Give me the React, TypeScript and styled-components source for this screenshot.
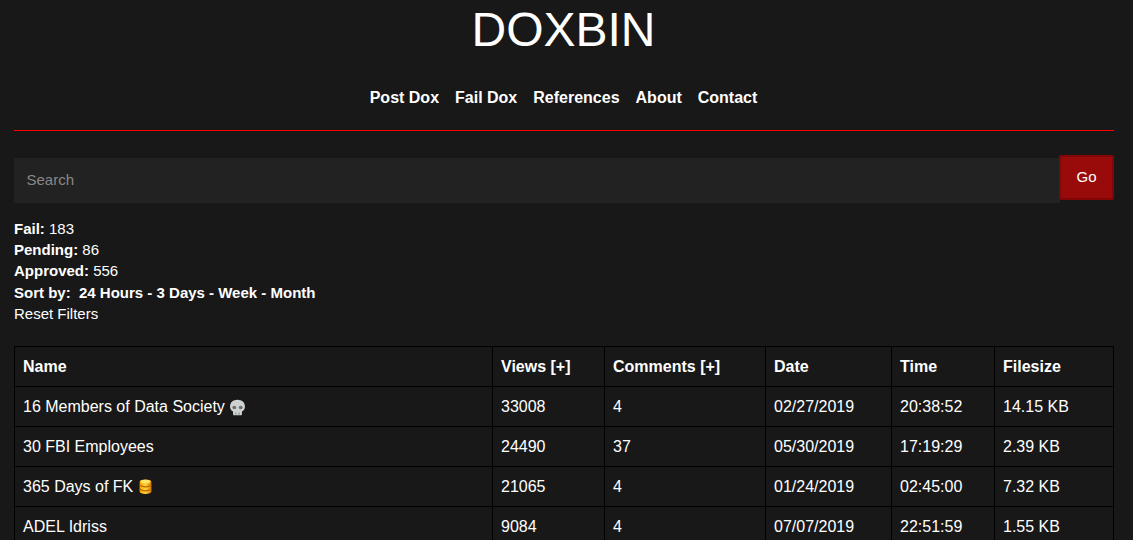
import React from "react";
import styled, { createGlobalStyle } from "styled-components";

interface Dox {
  name: string;
  views: number;
  comments: number;
  date: string;
  time: string;
  size: string;
  badge?: "skull" | "coins";
}

const rows: Dox[] = [
  { name: "16 Members of Data Society", views: 33008, comments: 4, date: "02/27/2019", time: "20:38:52", size: "14.15 KB", badge: "skull" },
  { name: "30 FBI Employees", views: 24490, comments: 37, date: "05/30/2019", time: "17:19:29", size: "2.39 KB" },
  { name: "365 Days of FK", views: 21065, comments: 4, date: "01/24/2019", time: "02:45:00", size: "7.32 KB", badge: "coins" },
  { name: "ADEL Idriss", views: 9084, comments: 4, date: "07/07/2019", time: "22:51:59", size: "1.55 KB" },
];

const GlobalStyle = createGlobalStyle`
  html, body {
    margin: 0;
    height: 540px;
    overflow: hidden;
    background: #181818;
    color: #fff;
    font-family: "Liberation Sans", Arial, sans-serif;
  }
`;

const Page = styled.div`
  width: 1099px;
  padding-left: 14px;
`;

const Title = styled.h1`
  margin: 0;
  height: 60px;
  font-size: 48px;
  font-weight: 400;
  line-height: 60px;
  text-align: center;
`;

const Nav = styled.nav`
  display: flex;
  justify-content: center;
  gap: 16px;
  padding-top: 29px;
  height: 41px;
`;

const NavLink = styled.a`
  font-size: 16px;
  font-weight: 700;
  line-height: 18px;
  color: #fff;
`;

const Divider = styled.hr`
  width: 1100px;
  height: 1px;
  margin: 0 0 24px;
  border: 0;
  background: #f00;
`;

const SearchRow = styled.form`
  display: flex;
  align-items: flex-start;
  width: 1100px;
  margin-bottom: 15px;
`;

const SearchInput = styled.input`
  flex: 1;
  box-sizing: border-box;
  height: 45px;
  margin-top: 3px;
  padding: 0 12.5px 2px;
  border: 0;
  outline: 0;
  background: #222;
  color: #fff;
  font-family: inherit;
  font-size: 15px;

  &::placeholder {
    color: #888;
    opacity: 1;
  }
`;

const GoButton = styled.button`
  box-sizing: border-box;
  width: 55px;
  height: 45px;
  margin-left: -1px;
  padding: 0 0 2px;
  border: 2px solid #830505;
  border-radius: 2px;
  background: #990a0a;
  color: #fff;
  font-family: inherit;
  font-size: 15px;
`;

const Stats = styled.div`
  font-size: 15px;
  line-height: 21.2px;
  margin-bottom: 22px;
`;

const StatLine = styled.div`
  height: 21.2px;
`;

const SortLink = styled.span`
  font-weight: 700;
`;

const Table = styled.table`
  width: 1099px;
  table-layout: fixed;
  border-collapse: collapse;
  font-size: 16px;
`;

const Cell = styled.td`
  box-sizing: border-box;
  height: 40px;
  padding: 2px 8px 0;
  border: 1px solid #000;
  white-space: nowrap;
`;

const HeadCell = styled(Cell).attrs({ as: "th" })<{ $width: number }>`
  width: ${(p) => p.$width}px;
  font-weight: 700;
  text-align: left;
`;

const Badge = styled.svg`
  width: 17px;
  height: 17px;
  margin-left: 4.5px;
  vertical-align: -4px;
`;

const CoinBadge = styled(Badge)`
  margin-left: 3.5px;
  vertical-align: -3px;
`;

const SkullIcon = () => (
  <Badge viewBox="0 0 16 16">
    <path d="M8 .8C3.9.8 1 3.4 1 7c0 2.3 1 3.9 2.8 4.8V14c0 .8.5 1.2 1.2 1.2h6c.7 0 1.2-.4 1.2-1.2v-2.2C14 10.900 15 9.300 15 7 15 3.400 12.100.8 8 .8z" fill="#cfd2d2" />
    <ellipse cx="5" cy="8" rx="1.800" ry="1.600" fill="#6a6e6e" />
    <ellipse cx="11" cy="8" rx="1.800" ry="1.600" fill="#6a6e6e" />
    <path d="M6.500 12.500v2.700M9.500 12.500v2.700" stroke="#888" strokeWidth=".8" />
  </Badge>
);

const CoinsIcon = () => (
  <CoinBadge viewBox="0 0 16 16">
    <defs>
      <linearGradient id="coin" x1="0" x2="1" y1="0" y2="0">
        <stop offset="0" stopColor="#f7a500" />
        <stop offset=".5" stopColor="#ffd23c" />
        <stop offset="1" stopColor="#d97f00" />
      </linearGradient>
    </defs>
    <path d="M2.500 3.500C2.500 2 4.800 1.300 8 1.300s5.500.7 5.500 2.200v9.300c0 1.300-2.300 2.200-5.500 2.200s-5.500-.9-5.500-2.200z" fill="url(#coin)" />
    <ellipse cx="8" cy="3.300" rx="4.700" ry="1.700" fill="#ffe46a" />
    <path d="M2.500 6.500c1 1.300 3 1.800 5.500 1.800s4.500-.5 5.500-1.800M2.500 10.300c1 1.300 3 1.800 5.500 1.800s4.500-.5 5.500-1.800" fill="none" stroke="#b96a00" strokeWidth="1.100" />
  </CoinBadge>
);

const columns = [
  { label: "Name", width: 478 },
  { label: "Views [+]", width: 112 },
  { label: "Comments [+]", width: 161 },
  { label: "Date", width: 126 },
  { label: "Time", width: 103 },
  { label: "Filesize", width: 119 },
];

const links = ["Post Dox", "Fail Dox", "References", "About", "Contact"];

const App: React.FC = () => (
  <Page>
    <GlobalStyle />
    <Title>DOXBIN</Title>
    <Nav>
      {links.map((link) => (
        <NavLink key={link}>{link}</NavLink>
      ))}
    </Nav>
    <Divider />
    <SearchRow onSubmit={(e) => e.preventDefault()}>
      <SearchInput placeholder="Search" />
      <GoButton>Go</GoButton>
    </SearchRow>
    <Stats>
      <StatLine><b>Fail:</b> 183</StatLine>
      <StatLine><b>Pending:</b> 86</StatLine>
      <StatLine><b>Approved:</b> 556</StatLine>
      <StatLine>
        <b>Sort by:</b>&nbsp; <SortLink>24 Hours - 3 Days - Week - Month</SortLink>
      </StatLine>
      <StatLine>Reset Filters</StatLine>
    </Stats>
    <Table>
      <thead>
        <tr>
          {columns.map((col) => (
            <HeadCell key={col.label} $width={col.width}>{col.label}</HeadCell>
          ))}
        </tr>
      </thead>
      <tbody>
        {rows.map((row) => (
          <tr key={row.name}>
            <Cell>
              {row.name}
              {row.badge === "skull" && <SkullIcon />}
              {row.badge === "coins" && <CoinsIcon />}
            </Cell>
            <Cell>{row.views}</Cell>
            <Cell>{row.comments}</Cell>
            <Cell>{row.date}</Cell>
            <Cell>{row.time}</Cell>
            <Cell>{row.size}</Cell>
          </tr>
        ))}
      </tbody>
    </Table>
  </Page>
);

export default App;
